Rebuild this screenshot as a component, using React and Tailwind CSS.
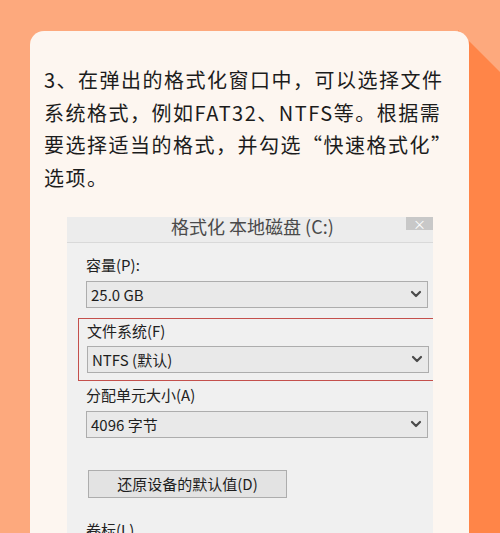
import { useState } from "react";

const cjk = { fontFamily: '"Noto Sans CJK SC", "Noto Sans", sans-serif' };

function Chevron() {
  return (
    <svg width="12" height="8" viewBox="0 0 12 8" className="mr-[5px]">
      <path d="M2 2 L6 6 L10 2" fill="none" stroke="#4a4a4a" strokeWidth="2.2" strokeLinecap="round" strokeLinejoin="round" />
    </svg>
  );
}

function Select({ value }) {
  return (
    <div className="flex items-center justify-between h-[27px] w-[342px] border border-[#adadad] bg-[#e9e9e9] pl-[4px] text-[15px] leading-none text-[#1e1e1e]">
      <span>{value}</span>
      <Chevron />
    </div>
  );
}

function Label({ children, className = "" }) {
  return <div className={`text-[15px] leading-[20px] text-[#222] ${className}`}>{children}</div>;
}

export default function App() {
  const [sizes] = useState(["25.0 GB", "NTFS (默认)", "4096 字节"]);

  return (
    <div className="relative w-[500px] h-[533px] overflow-hidden bg-[#fda97d]" style={cjk}>
      {/* darker diagonal band on the right */}
      <svg className="absolute inset-0" width="500" height="533">
        <polygon points="458,30 500,72 500,533 458,533" fill="#ff8548" />
      </svg>

      {/* CARD */}
      <div className="relative ml-[30px] mt-[31px] w-[439px] h-[560px] rounded-[14px] bg-[#fdf6f0] pt-[33px]">
        <p className="pl-[14px] text-[20px] leading-[32.7px] tracking-[1.5px] text-[#1c1c1c]">
          3、在弹出的格式化窗口中，可以选择文件
          <br />
          系统格式，例如FAT32、NTFS等。根据需
          <br />
          要选择适当的格式，并勾选“快速格式化”
          <br />
          选项。
        </p>

        {/* DIALOG SCREENSHOT */}
        <div className="ml-[37px] mt-[22px] w-[366px] h-[330px] overflow-hidden bg-[#f0f0f0]">
          <div className="relative h-[26px] border-b border-[#d9d9d9] bg-[#ececec]">
            <div className="absolute left-[104px] -top-[2px] text-[18px] leading-[22px] text-[#4a4a4a]">
              格式化 本地磁盘 (C:)
            </div>
            <div className="absolute right-0 top-0 w-[27px] h-[13px] bg-[#c8c8c8] flex items-end justify-center">
              <span className="text-white text-[13px] leading-[13px]">×</span>
            </div>
          </div>

          <div className="pl-[19px]">
            <Label className="mt-[12px]">容量(P):</Label>
            <div className="mt-[6px]">
              <Select value={sizes[0]} />
            </div>

            <div className="mt-[10px] -ml-[8px] w-[356px] border border-[#c4504c] pl-[8px] pt-[2px] pb-[7px]">
              <Label>文件系统(F)</Label>
              <div className="mt-[5px]">
                <Select value={sizes[1]} />
              </div>
            </div>

            <Label className="mt-[4px]">分配单元大小(A)</Label>
            <div className="mt-[6px]">
              <Select value={sizes[2]} />
            </div>

            <div className="mt-[32px] ml-[2px] w-[199px] h-[28px] border border-[#adadad] bg-[#e3e3e3] flex items-center justify-center text-[15px] text-[#1e1e1e]">
              还原设备的默认值(D)
            </div>

            <Label className="mt-[22px]">卷标(L)</Label>
          </div>
        </div>
      </div>
    </div>
  );
}
